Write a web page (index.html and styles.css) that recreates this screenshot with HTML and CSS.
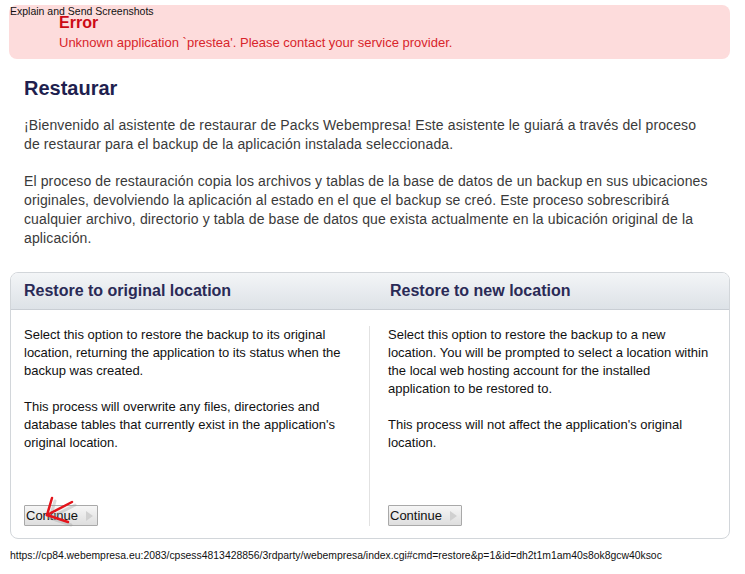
FILE: index.html
```html
<!DOCTYPE html>
<html>
<head>
<meta charset="utf-8">
<link rel="stylesheet" href="styles.css">
</head>
<body>
<div class="overlay-label">Explain and Send Screenshots</div>
<div class="error-box">
  <div class="error-title">Error</div>
  <div class="error-msg">Unknown application `prestea'. Please contact your service provider.</div>
</div>
<div class="content">
  <h1 class="title">Restaurar</h1>
  <p class="intro">¡Bienvenido al asistente de restaurar de Packs Webempresa! Este asistente le guiará a través del proceso de restaurar para el backup de la aplicación instalada seleccionada.</p>
  <p class="intro">El proceso de restauración copia los archivos y tablas de la base de datos de un backup en sus ubicaciones originales, devolviendo la aplicación al estado en el que el backup se creó. Este proceso sobrescribirá cualquier archivo, directorio y tabla de base de datos que exista actualmente en la ubicación original de la aplicación.</p>
</div>
<div class="panel">
  <div class="panel-head">
    <div class="head-cell">Restore to original location</div>
    <div class="head-cell">Restore to new location</div>
  </div>
  <div class="panel-body">
    <div class="col col-left">
      <div class="col-text">
        <p>Select this option to restore the backup to its original location, returning the application to its status when the backup was created.</p>
        <p>This process will overwrite any files, directories and database tables that currently exist in the application's original location.</p>
      </div>
      <div class="btn-wrap">
        <button class="btn">Continue <span class="tri"></span></button>
        <svg class="arrow" width="60" height="40" viewBox="0 0 60 40">
          <g stroke="#9a9a9a" stroke-opacity="0.35" stroke-width="3" stroke-linecap="round" fill="none">
            <line x1="51" y1="12" x2="26" y2="25"/>
            <line x1="26" y1="25" x2="31" y2="8"/>
            <line x1="26" y1="25" x2="47" y2="32"/>
          </g>
          <g stroke="#e3141b" stroke-width="2.5" stroke-linecap="round" fill="none">
            <line x1="48" y1="9" x2="23" y2="22"/>
            <line x1="23" y1="22" x2="28" y2="5"/>
            <line x1="23" y1="22" x2="44" y2="29"/>
          </g>
        </svg>
      </div>
    </div>
    <div class="col col-right">
      <div class="col-text">
        <p>Select this option to restore the backup to a new location. You will be prompted to select a location within the local web hosting account for the installed application to be restored to.</p>
        <p>This process will not affect the application's original location.</p>
      </div>
      <div class="btn-wrap">
        <button class="btn">Continue <span class="tri"></span></button>
      </div>
    </div>
  </div>
</div>
<div class="status-url">https://cp84.webempresa.eu:2083/cpsess4813428856/3rdparty/webempresa/index.cgi#cmd=restore&amp;p=1&amp;id=dh2t1m1am40s8ok8gcw40ksoc</div>
</body>
</html>
```
FILE: styles.css
```css
html, body {
  margin: 0;
  padding: 0;
  background: #fff;
  font-family: "Liberation Sans", Arial, sans-serif;
}
body {
  position: relative;
  width: 745px;
  height: 574px;
  overflow: hidden;
}
.overlay-label {
  position: absolute;
  left: 10px;
  top: 5px;
  font-size: 10.5px;
  color: #111;
  z-index: 2;
}
.error-box {
  margin: 5px 15px 0 9px;
  height: 54px;
  box-sizing: border-box;
  background: #fddcdc;
  border-radius: 8px;
  padding: 9px 0 0 50px;
}
.error-title {
  font-size: 16px;
  font-weight: bold;
  color: #cc0a14;
  line-height: 17px;
}
.error-msg {
  font-size: 13px;
  color: #d8252b;
  margin-top: 4px;
  line-height: 16px;
}
.content {
  padding: 0 35px 0 24px;
}
.title {
  margin: 17px 0 16px;
  font-size: 20px;
  line-height: 24px;
  font-weight: bold;
  color: #1f1f4f;
}
.intro {
  margin: 0 0 18px;
  font-size: 14px;
  line-height: 19px;
  letter-spacing: 0.12px;
  color: #3a3a3a;
}
.panel {
  margin: 24px 15px 0 10px;
  border: 1px solid #d2d6da;
  border-radius: 8px;
  height: 267px;
  box-sizing: border-box;
  overflow: hidden;
  display: flex;
  flex-direction: column;
}
.panel-head {
  display: grid;
  grid-template-columns: 366px 1fr;
  height: 37px;
  background: linear-gradient(#f3f5f7, #dde2e7);
  border-bottom: 1px solid #c9ced4;
  box-sizing: border-box;
}
.head-cell {
  padding: 9px 0 0 13px;
  font-size: 16px;
  font-weight: bold;
  color: #2a2a56;
}
.panel-body {
  flex: 1;
  display: grid;
  grid-template-columns: 359px 1fr;
  padding: 16px 0 12px;
}
.col {
  display: flex;
  flex-direction: column;
  justify-content: space-between;
}
.col-left {
  border-right: 1px solid #e2e2e2;
  padding: 0 14px 0 13px;
}
.col-right {
  padding: 0 14px 0 18px;
}
.col-text p {
  margin: 0 0 18px;
  font-size: 13px;
  line-height: 18px;
  color: #111;
}
.btn-wrap {
  position: relative;
  height: 21px;
}
.btn {
  height: 21px;
  padding: 0 4px 0 1px;
  font-family: "Liberation Sans", Arial, sans-serif;
  font-size: 13px;
  color: #111;
  border: 1px solid #a9a9a9;
  background: linear-gradient(#f6f6f6, #dedede);
  display: inline-flex;
  align-items: center;
  gap: 8px;
  border-radius: 1px;
}
.tri {
  width: 0;
  height: 0;
  border-left: 7px solid #d0d0d0;
  border-top: 5px solid transparent;
  border-bottom: 5px solid transparent;
}
.arrow {
  position: absolute;
  left: 0;
  top: -12px;
}
.status-url {
  margin: 11px 0 0 10px;
  font-size: 10.4px;
  color: #111;
}
```
